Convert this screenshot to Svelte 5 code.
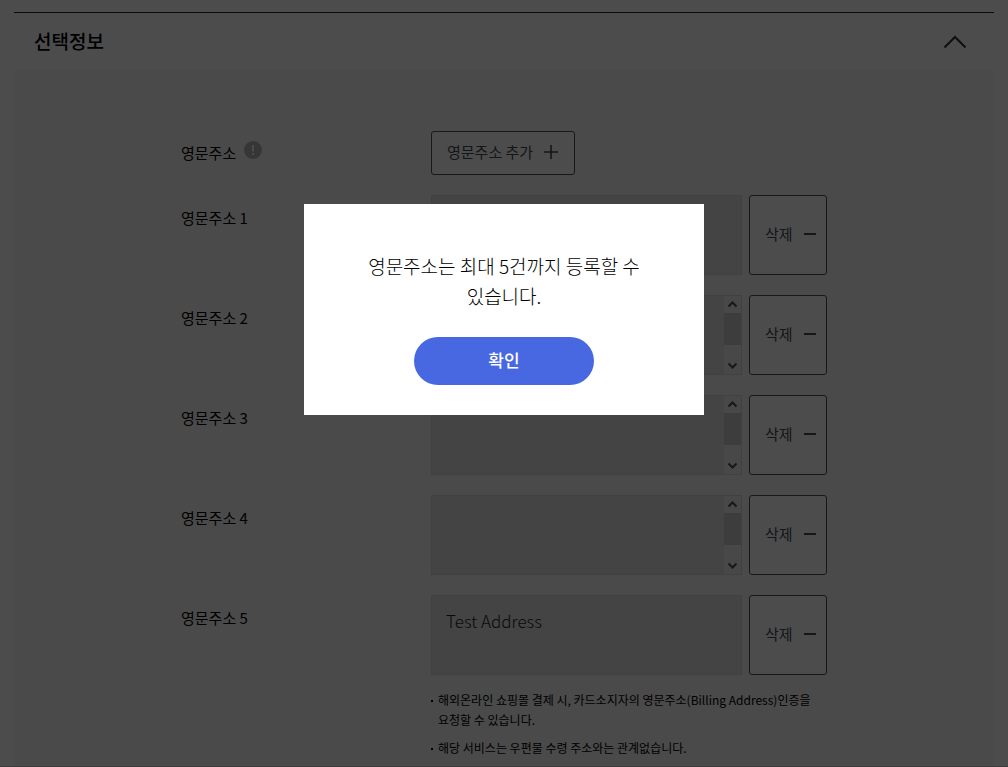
<script lang="ts">
	type Address = {
		id: number;
		value: string;
		scrolls: boolean;
	};

	let addresses = $state<Address[]>([
		{ id: 1, value: '', scrolls: false },
		{ id: 2, value: '', scrolls: true },
		{ id: 3, value: '', scrolls: true },
		{ id: 4, value: '', scrolls: true },
		{ id: 5, value: 'Test Address', scrolls: false }
	]);

	const notes = [
		'해외온라인 쇼핑몰 결제 시, 카드소지자의 영문주소(Billing Address)인증을 요청할 수 있습니다.',
		'해당 서비스는 우편물 수령 주소와는 관계없습니다.'
	];

	const MAX = 5;

	let expanded = $state(true);
	let alertOpen = $state(true);

	function add() {
		if (addresses.length >= MAX) {
			alertOpen = true;
			return;
		}
		const id = Math.max(0, ...addresses.map((a) => a.id)) + 1;
		addresses.push({ id, value: '', scrolls: false });
	}

	function remove(id: number) {
		addresses = addresses.filter((a) => a.id !== id);
	}
</script>

<main class="page">
	<section class="section">
		<header class="section-header">
			<h2>선택정보</h2>
			<button
				class="toggle"
				type="button"
				aria-label="선택정보"
				aria-expanded={expanded}
				onclick={() => (expanded = !expanded)}
			>
				<svg class:flipped={!expanded} width="24" height="14" viewBox="0 0 24 14">
					<path d="M1.5 12.5 12 2l10.5 10.5" fill="none" stroke="currentColor" stroke-width="2" />
				</svg>
			</button>
		</header>

		{#if expanded}
			<div class="panel">
				<div class="form">
					<div class="row first">
						<div class="label">
							<span>영문주소</span>
							<button class="tip" type="button" aria-label="영문주소 안내">
								<svg width="18" height="18" viewBox="0 0 18 18">
									<circle cx="9" cy="9" r="9" fill="#b6b6b6" />
									<path d="M9 4v6.5M9 12v2" stroke="#f7f7f7" stroke-width="2" />
								</svg>
							</button>
						</div>
						<button class="outline add" type="button" onclick={add}>
							영문주소 추가
							<svg width="14" height="14" viewBox="0 0 14 14">
								<path d="M0 7h14M7 0v14" stroke="currentColor" stroke-width="1.6" />
							</svg>
						</button>
					</div>

					{#each addresses as address, i (address.id)}
						<div class="row">
							<label class="label" for="address-{address.id}">영문주소 {i + 1}</label>
							<div class="field">
								<div class="box">
									<textarea id="address-{address.id}" readonly value={address.value}></textarea>
									{#if address.scrolls}
										<div class="scrollbar" aria-hidden="true">
											<svg width="17" height="17" viewBox="0 0 17 17">
												<path d="M4.5 10.5l4-4 4 4" />
											</svg>
											<div class="thumb"></div>
											<svg class="down" width="17" height="17" viewBox="0 0 17 17">
												<path d="M4.5 6.5l4 4 4-4" />
											</svg>
										</div>
									{/if}
								</div>
								<button class="outline remove" type="button" onclick={() => remove(address.id)}>
									삭제
									<svg width="12" height="2" viewBox="0 0 12 2">
										<path d="M0 1h12" stroke="currentColor" stroke-width="2" />
									</svg>
								</button>
							</div>
						</div>
					{/each}

					<ul class="notes">
						{#each notes as note}
							<li>{note}</li>
						{/each}
					</ul>
				</div>
			</div>
		{/if}
	</section>
</main>

{#if alertOpen}
	<div class="overlay">
		<div class="alert" role="alertdialog" aria-modal="true" aria-labelledby="alert-text">
			<p id="alert-text">영문주소는 최대 5건까지 등록할 수 있습니다.</p>
			<button class="confirm" type="button" onclick={() => (alertOpen = false)}>확인</button>
		</div>
	</div>
{/if}

<style>
	:global(body) {
		background: #fff;
		font-family: 'Noto Sans CJK KR', 'Noto Sans', sans-serif;
		color: #000;
	}

	* {
		box-sizing: border-box;
	}

	button {
		font-family: inherit;
		cursor: pointer;
	}

	.page {
		height: 100vh;
		overflow: hidden;
		padding: 12px 14px 0;
		border-bottom: 1px solid #c8c8c8;
	}

	.section {
		border-top: 1px solid #222;
	}

	.section-header {
		display: flex;
		align-items: center;
		justify-content: space-between;
		height: 58px;
		padding: 0 27px 0 20px;
	}

	h2 {
		margin: 0;
		padding-bottom: 2px;
		font-size: 19px;
		font-weight: 500;
		line-height: 28px;
	}

	.toggle {
		display: flex;
		padding: 0;
		border: 0;
		background: none;
		color: #333;
	}

	.flipped {
		transform: rotate(180deg);
	}

	.panel {
		padding: 60px 20px;
		background: #f7f7f7;
	}

	.form {
		max-width: 646px;
		margin: 0 auto;
	}

	.row {
		display: grid;
		grid-template-columns: 250px 1fr;
		align-items: start;
		margin-bottom: 20px;
	}

	.label {
		display: flex;
		gap: 8px;
		font-size: 15px;
		line-height: 46px;
		white-space: pre;
	}

	.first .label {
		line-height: 44px;
	}

	.tip {
		display: flex;
		align-self: flex-start;
		margin-top: 10px;
		padding: 0;
		border: 0;
		background: none;
	}

	.outline {
		display: flex;
		align-items: center;
		border: 1px solid #50535a;
		border-radius: 3px;
		background: #fff;
		color: #454b56;
		font-size: 15px;
		line-height: 22px;
		padding: 0 0 2px 15px;
	}

	.add {
		gap: 11px;
		width: 144px;
		height: 44px;
	}

	.field {
		display: flex;
		gap: 7px;
	}

	.box {
		display: flex;
		flex: 1;
		height: 80px;
		border: 1px solid #dadada;
		background: #e5e5e5;
	}

	textarea {
		flex: 1;
		min-width: 0;
		padding: 13px 14px;
		border: 0;
		outline: 0;
		resize: none;
		overflow: hidden;
		background: none;
		color: #222;
		font-family: inherit;
		font-size: 17px;
		font-weight: 300;
		line-height: 24px;
	}

	.scrollbar {
		display: flex;
		flex-direction: column;
		width: 17px;
		background: #f0f0f0;
	}

	.scrollbar path {
		fill: none;
		stroke: #505050;
		stroke-width: 2;
	}

	.thumb {
		height: 32px;
		background: #cdcdcd;
	}

	.down {
		margin-top: auto;
	}

	.remove {
		gap: 11px;
		width: 78px;
		height: 80px;
	}

	.notes {
		margin: -5px 0 0 250px;
		padding: 0;
		list-style: none;
		font-size: 12px;
		line-height: 20px;
	}

	.notes li {
		display: flex;
		gap: 5px;
		margin-bottom: 8px;
		word-break: keep-all;
	}

	.notes li::before {
		content: '';
		flex: none;
		width: 2px;
		height: 2px;
		margin-top: 10px;
		background: #000;
	}

	.overlay {
		position: fixed;
		inset: 0;
		display: flex;
		align-items: flex-start;
		justify-content: center;
		padding-top: 204px;
		background: rgba(0, 0, 0, 0.7);
	}

	.alert {
		display: flex;
		flex-direction: column;
		align-items: center;
		width: 400px;
		padding: 47px 60px 30px;
		background: #fff;
	}

	.alert p {
		margin: 0 0 26px;
		font-size: 19px;
		font-weight: 300;
		line-height: 30px;
		text-align: center;
		word-break: keep-all;
	}

	.confirm {
		width: 180px;
		height: 48px;
		padding: 0 0 4px;
		border: 0;
		border-radius: 24px;
		background: #4868e1;
		color: #fff;
		font-size: 17px;
		font-weight: 500;
	}
</style>
